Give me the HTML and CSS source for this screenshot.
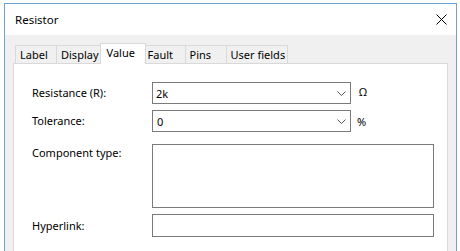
FILE: index.html
```html
<!DOCTYPE html>
<html>
<head>
<meta charset="utf-8">
<link rel="stylesheet" href="styles.css">
</head>
<body>
<div class="window">
  <div class="titlebar">
    <span class="title">Resistor</span>
    <svg class="close" width="11" height="11" viewBox="0 0 11 11"><path d="M0.5 0.5 L10.5 10.5 M10.5 0.5 L0.5 10.5" stroke="#000" stroke-width="1" fill="none"/></svg>
  </div>
  <div class="content">
    <div class="tabs">
      <div class="tab">Label</div>
      <div class="tab">Display</div>
      <div class="tab active">Value</div>
      <div class="tab">Fault</div>
      <div class="tab">Pins</div>
      <div class="tab">User fields</div>
    </div>
    <div class="panel">
      <div class="row row-combo">
        <span class="label">Resistance (R):</span>
        <div class="combo"><span class="val">2k</span><svg class="chev" width="9" height="5" viewBox="0 0 9 5"><polyline points="0.5,0.5 4.5,4.5 8.5,0.5" fill="none" stroke="#555" stroke-width="1"/></svg></div>
        <span class="unit">Ω</span>
      </div>
      <div class="row row-combo second">
        <span class="label">Tolerance:</span>
        <div class="combo"><span class="val">0</span><svg class="chev" width="9" height="5" viewBox="0 0 9 5"><polyline points="0.5,0.5 4.5,4.5 8.5,0.5" fill="none" stroke="#555" stroke-width="1"/></svg></div>
        <span class="unit">%</span>
      </div>
      <div class="row row-area">
        <span class="label">Component type:</span>
        <div class="area"></div>
      </div>
      <div class="row row-link">
        <span class="label">Hyperlink:</span>
        <div class="field"></div>
      </div>
    </div>
  </div>
</div>
</body>
</html>
```
FILE: styles.css
```css
html, body {
  margin: 0;
  padding: 0;
  background: #ffffff;
  overflow: hidden;
  height: 251px;
}
body {
  font-family: "Segoe UI", "Noto Sans", "DejaVu Sans", sans-serif;
  font-size: 11px;
  color: #000;
}
.window {
  margin: 3px 0 0 4px;
  width: 453px;
  height: 248px;
  box-sizing: border-box;
  border: 1px solid #6aa3d8;
  border-bottom: none;
  background: #f0f0f0;
  display: flex;
  flex-direction: column;
}
.titlebar {
  height: 31px;
  flex: none;
  background: #fff;
  display: flex;
  align-items: center;
  justify-content: space-between;
  padding-left: 10px;
  padding-right: 9px;
}
.title {
  font-size: 11.5px;
  line-height: 16px;
}
.close {
  display: block;
}
.content {
  padding: 8px 8px 0 8px;
  flex: 1;
  display: flex;
  flex-direction: column;
}
.tabs {
  display: flex;
  align-items: flex-end;
  height: 20px;
  flex: none;
  padding-left: 2px;
  position: relative;
  z-index: 1;
}
.tab {
  height: 18px;
  min-width: 42px;
  box-sizing: border-box;
  padding: 0 2px 0 4px;
  border: 1px solid #d9d9d9;
  border-bottom: none;
  background: #f0f0f0;
  line-height: 17px;
  margin-left: -1px;
}
.tab:first-child {
  margin-left: 0;
}
.tab.active {
  height: 21px;
  margin: 0 -2px -1px -2px;
  padding-left: 6px;
  min-width: 46px;
  background: #fff;
  line-height: 18px;
  position: relative;
  z-index: 2;
}
.tab.active + .tab {
  border-left: none;
  margin-left: 0;
}
.panel {
  flex: 1;
  border: 1px solid #d9d9d9;
  border-bottom: none;
  background: #fff;
  padding: 18px 0 0 18px;
}
.row {
  display: flex;
}
.label {
  width: 120px;
  flex: none;
  line-height: 16px;
}
.row-combo {
  align-items: center;
  height: 22px;
}
.row-combo.second {
  margin-top: 6px;
}
.combo {
  width: 199px;
  height: 22px;
  box-sizing: border-box;
  border: 1px solid #7a7a7a;
  display: flex;
  align-items: center;
  justify-content: space-between;
  padding: 0 4px 0 3px;
}
.row-combo.second .combo .val {
  padding-left: 1px;
}
.chev {
  display: block;
  margin-top: 1px;
}
.unit {
  margin-left: 8px;
  line-height: 16px;
  margin-top: -3px;
}
.row-combo.second .unit {
  margin-left: 6px;
  margin-top: 1px;
}
.row-area {
  margin-top: 12px;
  align-items: flex-start;
}
.row-area .label {
  padding-top: 1px;
}
.area {
  width: 282px;
  height: 64px;
  box-sizing: border-box;
  border: 1px solid #7a7a7a;
}
.row-link {
  margin-top: 6px;
  align-items: center;
}
.field {
  width: 282px;
  height: 23px;
  box-sizing: border-box;
  border: 1px solid #7a7a7a;
}
```
